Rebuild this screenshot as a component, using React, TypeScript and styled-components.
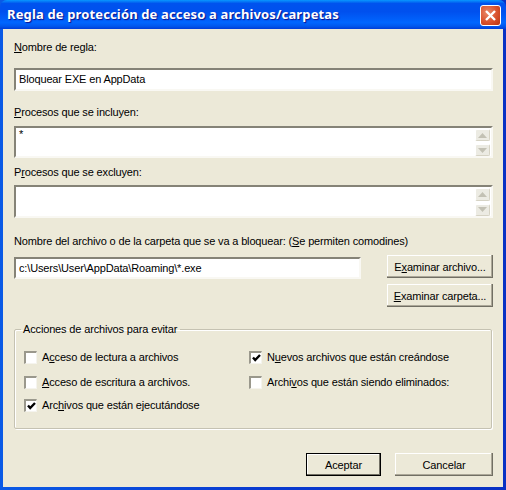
import styled, { createGlobalStyle } from "styled-components";

const GlobalStyle = createGlobalStyle`
  html, body { margin: 0; padding: 0; background: #0a3bd0; }
  * { box-sizing: border-box; }
`;

const Window = styled.div`
  width: 506px;
  height: 490px;
  display: flex;
  flex-direction: column;
  background: linear-gradient(90deg, #0a5ae6 0%, #0a3bd0 50%, #0831c4 100%);
  overflow: hidden;
  font-family: "Liberation Sans", sans-serif;
  font-size: 11px;
  letter-spacing: -0.15px;
  color: #000;
`;

const TitleBar = styled.div`
  height: 29px;
  flex: none;
  display: flex;
  align-items: center;
  justify-content: space-between;
  padding: 2px 5px 0 7px;
  border-radius: 7px 7px 0 0;
  background: linear-gradient(
    180deg,
    #0997ff 0%,
    #0053ee 12%,
    #0050ee 40%,
    #0066ff 78%,
    #0058ee 90%,
    #003dd7 100%
  );
`;

const Title = styled.span`
  margin-bottom: 3px;
  font-family: "Noto Sans", sans-serif;
  font-size: 13px;
  font-weight: 700;
  letter-spacing: 0.14px;
  color: #fff;
  text-shadow: 1px 1px 1px #0f1089;
`;

const CloseButton = styled.div`
  width: 21px;
  height: 21px;
  display: flex;
  align-items: center;
  justify-content: center;
  border: 1px solid #fff;
  border-radius: 3px;
  background: radial-gradient(circle at 35% 35%, #e98a6a 0%, #d9512c 55%, #b8330f 100%);
`;

const Frame = styled.div`
  flex: 1;
  margin: 0 3px 3px 3px;
  padding: 12px 10px 0 11px;
  background: #ece9d8;
  display: flex;
  flex-direction: column;
`;

const Label = styled.div<{ $top: number }>`
  margin-top: ${(p) => p.$top}px;
  height: 13px;
  line-height: 13px;
  white-space: nowrap;
`;

const Sunken = styled.div<{ $height: number; $top: number; $width?: number; $multi?: boolean }>`
  height: ${(p) => p.$height}px;
  width: ${(p) => (p.$width ? `${p.$width}px` : "100%")};
  margin-top: ${(p) => p.$top}px;
  flex: none;
  display: flex;
  justify-content: space-between;
  background: #fff;
  border-style: solid;
  border-width: 2px;
  border-color: #858377 #f9f8f3 #f9f8f3 #858377;
  padding: 0 1px 0 3px;
  line-height: ${(p) => (p.$multi ? 12 : 18)}px;
  white-space: nowrap;
`;

const SpinColumn = styled.div`
  width: 15px;
  flex: none;
  display: flex;
  flex-direction: column;
  gap: 3px;
  padding-top: 1px;
`;

const SpinButton = styled.div`
  height: 13px;
  display: flex;
  align-items: center;
  justify-content: center;
  background: #ecebe3;
  border: 1px solid;
  border-color: #fff #d6d3c4 #d6d3c4 #fff;
  border-radius: 2px;
`;

const BrowseRow = styled.div`
  display: flex;
  justify-content: space-between;
  align-items: flex-start;
  margin-top: 9px;
`;

const BrowseStack = styled.div`
  display: flex;
  flex-direction: column;
  gap: 6px;
  margin-top: -2px;
`;

const Button = styled.div<{ $width: number; $default?: boolean }>`
  width: ${(p) => p.$width}px;
  height: 23px;
  display: flex;
  align-items: center;
  justify-content: center;
  white-space: nowrap;
  background: #ece9d8;
  ${(p) =>
    p.$default
      ? `outline: 1px solid #000; outline-offset: -1px; box-shadow: inset -2px -2px 0 #716f64, inset 2px 2px 0 #fff;`
      : `box-shadow: inset -1px -1px 0 #716f64, inset -2px -2px 0 #aca899, inset 1px 1px 0 #fff;`}
`;

const Group = styled.fieldset`
  margin: 16px 1px 0 0;
  padding: 0 0 0 9px;
  height: 106px;
  border: 1px solid #c5c2b2;
  box-shadow: 1px 1px 0 #fff, inset 1px 1px 0 #fff;
  border-radius: 2px;
`;

const GroupTitle = styled.legend`
  margin-left: -3px;
  padding: 0 3px 0 2px;
  line-height: 13px;
  white-space: nowrap;
`;

const CheckGrid = styled.div`
  display: grid;
  grid-template-columns: 225px 1fr;
  grid-template-rows: 25px 23px 23px;
  margin-top: 15px;
`;

const CheckRow = styled.div`
  display: flex;
  align-items: flex-start;
  gap: 5px;
  white-space: nowrap;
  line-height: 13px;
`;

const CheckBox = styled.div`
  width: 13px;
  height: 13px;
  flex: none;
  display: flex;
  align-items: center;
  justify-content: center;
  background: #fff;
  border-style: solid;
  border-width: 2px 1px 1px 2px;
  border-color: #9a988c #f5f4ee #f5f4ee #9a988c;
`;

const Footer = styled.div`
  display: flex;
  justify-content: flex-end;
  gap: 14px;
  margin-top: 24px;
`;

const Arrow = ({ down }: { down?: boolean }) => (
  <svg width="9" height="5" viewBox="0 0 9 5">
    <path d={down ? "M0 0h9L4.5 5z" : "M0 5h9L4.5 0z"} fill="#c3c1b4" />
  </svg>
);

const Spin = () => (
  <SpinColumn>
    <SpinButton><Arrow /></SpinButton>
    <SpinButton><Arrow down /></SpinButton>
  </SpinColumn>
);

const Check = ({ label, checked }: { label: React.ReactNode; checked?: boolean }) => (
  <CheckRow>
    <CheckBox>
      {checked && (
        <svg width="9" height="8" viewBox="0 0 9 8">
          <path d="M1 3.5 3.2 6 8 1" fill="none" stroke="#000" strokeWidth="2.4" />
        </svg>
      )}
    </CheckBox>
    <span>{label}</span>
  </CheckRow>
);

export default function App() {
  return (
    <>
      <GlobalStyle />
      <Window>
        <TitleBar>
          <Title>Regla de protección de acceso a archivos/carpetas</Title>
          <CloseButton>
            <svg width="13" height="13" viewBox="0 0 13 13">
              <path d="M2 2 11 11M11 2 2 11" stroke="#fff" strokeWidth="2.4" />
            </svg>
          </CloseButton>
        </TitleBar>
        <Frame>
          <Label $top={0}><u>N</u>ombre de regla:</Label>
          <Sunken $height={23} $top={14}>Bloquear EXE en AppData</Sunken>

          <Label $top={15}><u>P</u>rocesos que se incluyen:</Label>
          <Sunken $height={32} $top={7} $multi>* <Spin /></Sunken>

          <Label $top={8}>P<u>r</u>ocesos que se excluyen:</Label>
          <Sunken $height={33} $top={6} $multi><span /><Spin /></Sunken>

          <Label $top={17}>
            Nombre del archivo o de la carpeta que se va a bloquear: (<u>S</u>e permiten comodines)
          </Label>
          <BrowseRow>
            <Sunken $height={22} $top={0} $width={347}>c:\Users\User\AppData\Roaming\*.exe</Sunken>
            <BrowseStack>
              <Button $width={106}>E<u>x</u>aminar archivo...</Button>
              <Button $width={106}><u>E</u>xaminar carpeta...</Button>
            </BrowseStack>
          </BrowseRow>

          <Group>
            <GroupTitle>Acciones de archivos para evitar</GroupTitle>
            <CheckGrid>
              <Check label={<>A<u>c</u>ceso de lectura a archivos</>} />
              <Check checked label={<>N<u>u</u>evos archivos que están creándose</>} />
              <Check label={<><u>A</u>cceso de escritura a archivos.</>} />
              <Check label={<>Archi<u>v</u>os que están siendo eliminados:</>} />
              <Check checked label={<>Arc<u>h</u>ivos que están ejecutándose</>} />
            </CheckGrid>
          </Group>

          <Footer>
            <Button $width={75} $default>Aceptar</Button>
            <Button $width={98}>Cancelar</Button>
          </Footer>
        </Frame>
      </Window>
    </>
  );
}
